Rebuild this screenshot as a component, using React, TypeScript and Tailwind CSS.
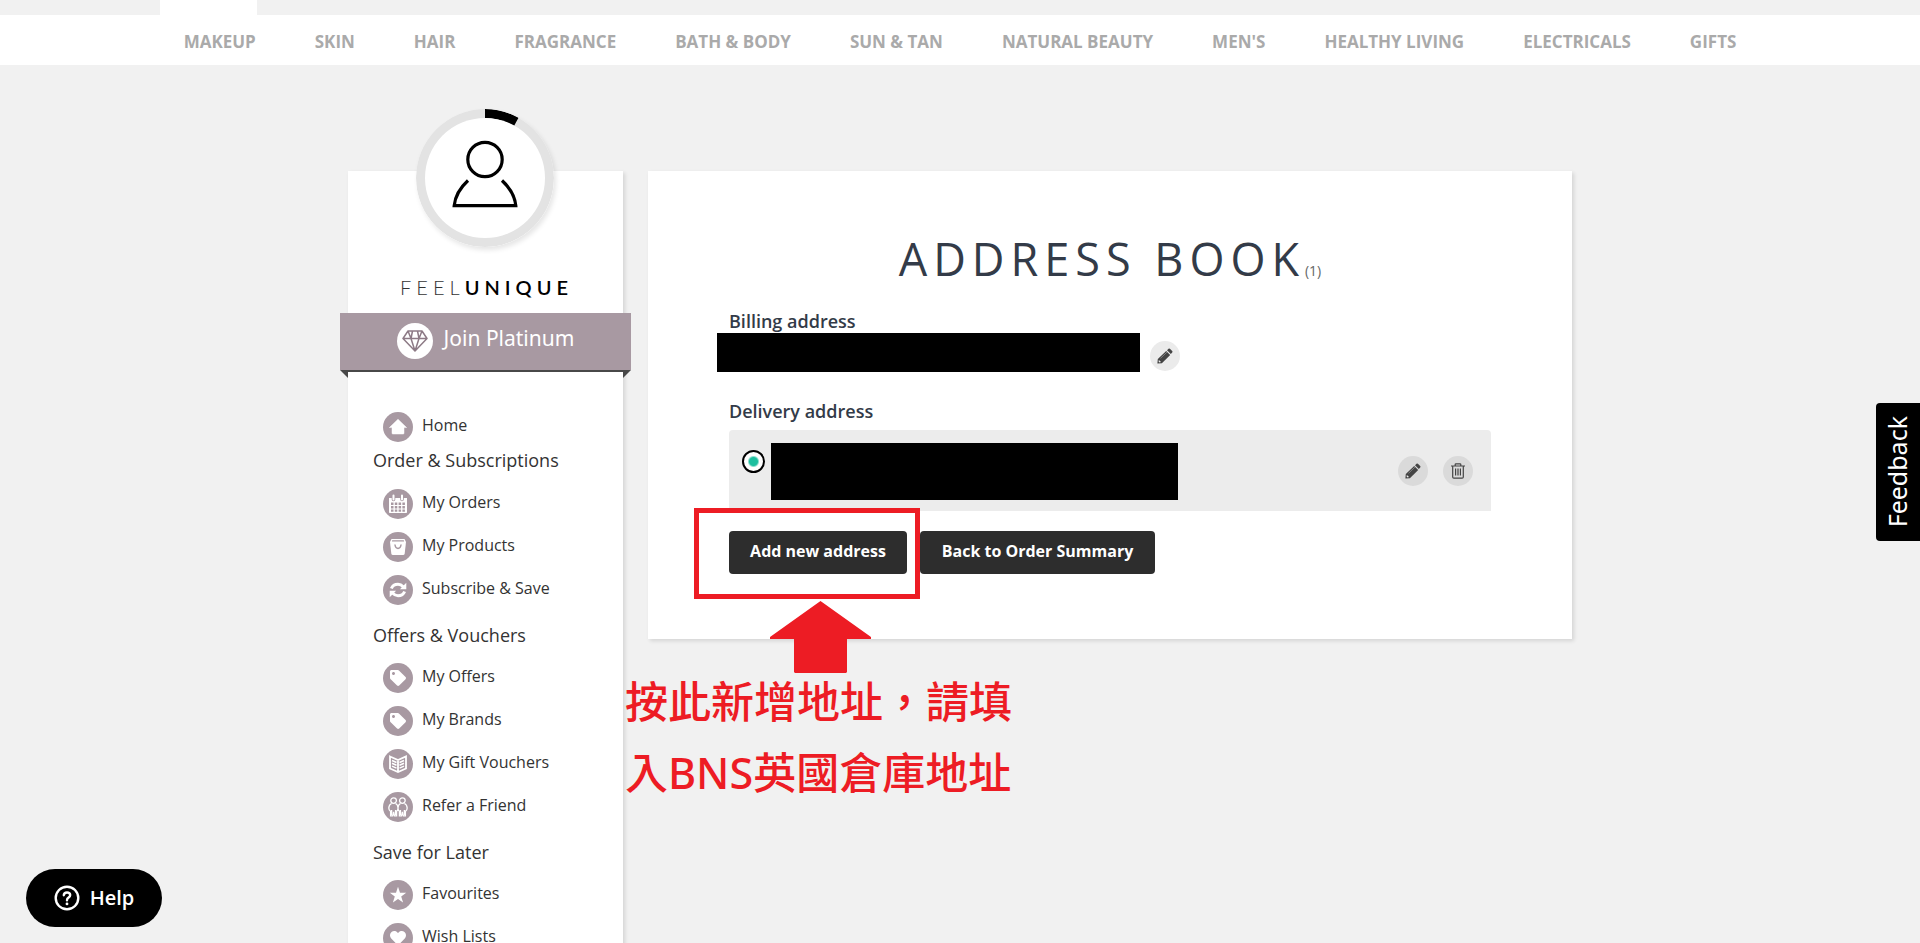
import type { ReactNode } from "react";
import { FaHeart, FaTag } from "react-icons/fa";

const categories = [
  "Makeup",
  "Skin",
  "Hair",
  "Fragrance",
  "Bath & Body",
  "Sun & Tan",
  "Natural Beauty",
  "Men's",
  "Healthy Living",
  "Electricals",
  "Gifts",
];

function HomeIcon() {
  return (
    <svg viewBox="0 0 20 20" className="size-5" fill="currentColor">
      <path d="M10 2.200 18.600 10.600H16V16.200Q16 17 15.200 17H4.800Q4 17 4 16.200V10.600H1.400Z" stroke="currentColor" strokeWidth="0.5" strokeLinejoin="round" />
    </svg>
  );
}

function CalendarIcon() {
  return (
    <svg viewBox="0 0 20 20" className="size-5">
      <path d="M1 4h18v14.200q0 .8-.8.800H1.800q-.8 0-.8-.8z" fill="#fff" />
      <path d="M5.500 1.200v4.300M14 1.200v4.300" stroke="#a899a2" strokeWidth="3.600" strokeLinecap="round" />
      <path d="M5.500 1.400v4M14 1.400v4" stroke="#fff" strokeWidth="2" strokeLinecap="round" />
      <path
        d="M3 8.500h2.500v2.500H3zM6.800 8.500h2.500v2.500H6.800zM10.600 8.500h2.500v2.500h-2.500zM14.400 8.500h2.500v2.500h-2.500zM3 12.100h2.500v2.300H3zM6.800 12.100h2.500v2.300H6.800zM10.600 12.100h2.500v2.300h-2.500zM14.400 12.100h2.500v2.300h-2.500zM3 15.500h2.500v2.200H3zM6.800 15.500h2.500v2.200H6.800zM10.600 15.500h2.500v2.200h-2.500zM14.400 15.500h2.500v2.200h-2.500z"
        fill="#a899a2"
      />
    </svg>
  );
}

function BagIcon() {
  return (
    <svg viewBox="0 0 20 20" className="size-5">
      <path d="M3.500 2h13l1.500 3-1.300 11.500q-.2 1.500-1.700 1.500H5q-1.500 0-1.700-1.500L2 5z" fill="#fff" />
      <path d="M4.600 3.900h10.800M7 8q.5 3.500 3 3.500T13 8" stroke="#a899a2" strokeWidth="1.400" fill="none" strokeLinecap="round" />
    </svg>
  );
}

function RefreshIcon() {
  return (
    <svg viewBox="0 0 20 20" className="size-5" fill="none" stroke="#fff" strokeWidth="3">
      <path d="M3.400 8.600Q5 4.300 10 4.300q3 0 5.200 2.400" />
      <path d="M16.600 11.400Q15 15.700 10 15.700q-3 0-5.200-2.400" />
      <path d="M18.300 2.800v6.400h-6.400zM1.700 17.200v-6.400h6.400z" fill="#fff" stroke="none" />
    </svg>
  );
}

function BookletIcon() {
  return (
    <svg viewBox="0 0 20 20" className="size-5" fill="none" stroke="#fff" strokeWidth="1.500">
      <path d="M2 2.500 10 6l8-3.500V14.500L10 18l-8-3.500zM10 6v12" strokeWidth="1.800" />
      <path d="M4 6.500l4.500 2M4 9.300l4.500 2M4 12.100l4.500 2M16 6.500l-4.500 2M16 9.300l-4.500 2M16 12.100l-4.500 2" />
    </svg>
  );
}

function FriendsIcon() {
  return (
    <svg viewBox="0 0 20 20" className="size-5" fill="none" stroke="#fff" strokeWidth="1.300">
      <circle cx="5.600" cy="3.600" r="2.800" />
      <circle cx="14.400" cy="3.600" r="2.800" />
      <path d="M3.600 6.500Q.9 7.800.8 11q0 2.300 1.800 3.500v4.300h2.100L5.600 15l.9 3.800h2.100v-4.300Q10 13.500 10 11q0-3.300-2.500-4.500M12.500 6.500Q10 7.800 10 11q0 2.500 1.400 3.500v4.300h2.100l.9-3.800.9 3.800h2.100v-4.300q1.800-1.200 1.800-3.500-.1-3.200-2.800-4.500" />
      <path d="M3.500 13v5M7.700 13v5M12.300 13v5M16.500 13v5" strokeWidth="1.600" />
    </svg>
  );
}

function StarIcon() {
  return (
    <svg viewBox="0 0 20 20" className="size-5" fill="currentColor">
      <path d="M10 1.800 12 7.800h6.200l-5 3.700 1.900 6L10 13.900 4.900 17.500l1.900-6-5-3.700H8z" />
    </svg>
  );
}

function PencilIcon() {
  return (
    <svg viewBox="0 0 16 16" className="size-4" fill="#444">
      <path d="M.4 15.600.8 11 9.200 2.900l4 4L4.900 15.200z" />
      <path d="M10 2.200 11.500.8q.7-.6 1.400 0l2.300 2.300q.7.700 0 1.400l-1.400 1.500z" />
      <path d="M1.900 11.900l2.100 2.100-1.500.4-.9-.9z" fill="#ebebeb" />
      <path d="M3.500 10.300 10 4.100" stroke="#999" strokeWidth=".7" />
    </svg>
  );
}

function TrashIcon() {
  return (
    <svg viewBox="0 0 16 16" className="size-4" fill="none" stroke="#444" strokeWidth="1.200">
      <path d="M1 3h14M5.200 3V1.600q0-.8.800-.8h4q.8 0 .8.800V3M2.700 3.200V14q0 1.200 1.200 1.200h8.200q1.200 0 1.200-1.200V3.200" />
      <path d="M5.600 5.500v7M8 5.500v7M10.400 5.500v7" />
    </svg>
  );
}

type Item = { label: string; icon: ReactNode };

const groups: { title: string; items: Item[] }[] = [
  {
    title: "Order & Subscriptions",
    items: [
      { label: "My Orders", icon: <CalendarIcon /> },
      { label: "My Products", icon: <BagIcon /> },
      { label: "Subscribe & Save", icon: <RefreshIcon /> },
    ],
  },
  {
    title: "Offers & Vouchers",
    items: [
      { label: "My Offers", icon: <FaTag className="size-4" /> },
      { label: "My Brands", icon: <FaTag className="size-4" /> },
      { label: "My Gift Vouchers", icon: <BookletIcon /> },
      { label: "Refer a Friend", icon: <FriendsIcon /> },
    ],
  },
  {
    title: "Save for Later",
    items: [
      { label: "Favourites", icon: <StarIcon /> },
      { label: "Wish Lists", icon: <FaHeart className="size-4" /> },
    ],
  },
];

function MenuLink({ label, icon }: Item) {
  return (
    <a href="#" className="flex h-[30px] items-center gap-[9px] pl-[35px] text-[#333]">
      <span className="flex size-[30px] items-center justify-center rounded-full bg-[#a899a2] text-white">{icon}</span>
      <span className="pb-1 text-[16px] leading-6">{label}</span>
    </a>
  );
}

function Sidebar() {
  return (
    <aside className="w-[275px] shrink-0 bg-white pb-10 shadow-[2px_2px_4px_rgba(0,0,0,0.12)]">
      <div className="-mt-[62px] flex justify-center pr-px">
        <svg viewBox="0 0 138 138" className="size-[138px] rounded-full shadow-[2px_3px_5px_rgba(0,0,0,0.1)]" role="img" aria-label="Profile">
          <circle cx="69" cy="69" r="69" fill="#e3e3e3" />
          <path d="M69 0A69 69 0 0 1 102.500 8.700L98 17A60 60 0 0 0 69 9Z" fill="#000" />
          <circle cx="69" cy="69" r="60" fill="#fff" />
          <g fill="none" stroke="#000" strokeWidth="3.200">
            <circle cx="69" cy="50.500" r="17.200" />
            <path d="M52 71.500Q39.500 83 38.200 96.700H99.800Q98.500 83 86 71.500" strokeLinejoin="miter" />
          </g>
        </svg>
      </div>
      <p className="mt-[26px] pl-[2px] text-center font-['Lato'] text-[20px] leading-7 tracking-[5px] text-black">
        <span className="font-light text-[#333]">FEEL</span>
        <span className="font-semibold">UNIQUE</span>
      </p>
      <div className="-mx-2 mt-[12px]">
        <a href="#" className="flex h-[57px] items-center justify-center gap-[11px] bg-[#a899a2] pb-px text-white">
          <span className="flex size-9 items-center justify-center rounded-full bg-white">
            <svg viewBox="0 0 26 22" className="h-[22px] w-[26px]" fill="none" stroke="#8d7a86" strokeWidth="1.500" strokeLinejoin="round">
              <path d="M6 1h14l5 7.500L13 21 1 8.500zM1 8.500h24M6 1l3 7.500L13 21l4-12.500L20 1M9 8.500 10.500 1M17 8.500 15.500 1" />
            </svg>
          </span>
          <span className="pb-[6px] font-['Noto_Sans'] text-[21px] leading-7">Join Platinum</span>
        </a>
        <svg viewBox="0 0 291 8" className="block h-2 w-full" preserveAspectRatio="none">
          <path d="M0 0H291L283 8V2H8V8Z" fill="#484848" />
        </svg>
      </div>
      <nav className="mt-[34px]" aria-label="Account">
        <MenuLink label="Home" icon={<HomeIcon />} />
        {groups.map((g, i) => (
          <section key={g.title}>
            <h2 className={i === 0 ? "pt-1 pb-[15px] pl-[25px] text-[18px] leading-7 text-[#333]" : "pt-4 pb-[14px] pl-[25px] text-[18px] leading-7 text-[#333]"}>
              {g.title}
            </h2>
            <div className="flex flex-col gap-[13px]">
              {g.items.map((item) => (
                <MenuLink key={item.label} {...item} />
              ))}
            </div>
          </section>
        ))}
      </nav>
    </aside>
  );
}

function AddressBook() {
  return (
    <main className="min-w-0 flex-1 bg-white px-[81px] pt-[56px] pb-[65px] text-[#333b48] shadow-[2px_2px_4px_rgba(0,0,0,0.12)]">
      <h1 className="text-center text-[45px] leading-[64px] whitespace-nowrap uppercase">
        <span className="tracking-[6px]">Address Book</span>
        <small className="text-[14px] text-[#666]">(1)</small>
      </h1>
      <h2 className="mt-[6px] text-[18px] leading-6 font-semibold">Billing address</h2>
      <div className="-ml-3 flex gap-[10px]">
        <div className="h-[39px] w-[423px] bg-black" />
        <button aria-label="Edit billing address" className="mt-2 flex size-[30px] items-center justify-center rounded-full bg-[#ebebeb]">
          <PencilIcon />
        </button>
      </div>
      <h2 className="mt-[27px] text-[18px] leading-6 font-semibold">Delivery address</h2>
      <div className="mt-[7px] flex h-[81px] items-center rounded-t bg-[#ececec] pr-[18px] pl-[13px]">
        <input
          type="radio"
          name="delivery"
          aria-label="Delivery address"
          defaultChecked
          className="mb-[18px] size-[23px] appearance-none rounded-full border-2 border-black bg-white bg-[radial-gradient(circle,#1dbf9f_4px,#fff_6px)]"
        />
        <div className="mt-[2px] ml-[6px] h-[57px] w-[407px] bg-black" />
        <div className="ml-auto flex gap-[15px]">
          <button aria-label="Edit delivery address" className="flex size-[30px] items-center justify-center rounded-full bg-[#dadada]">
            <PencilIcon />
          </button>
          <button aria-label="Delete delivery address" className="flex size-[30px] items-center justify-center rounded-full bg-[#dadada]">
            <TrashIcon />
          </button>
        </div>
      </div>
      <div className="mt-5 flex gap-[13px] text-[16px] leading-6 font-bold text-white">
        <div className="relative">
          <button className="h-[43px] w-[178px] rounded bg-[#2d2d2d] pb-1 whitespace-nowrap">Add new address</button>
          <div className="pointer-events-none absolute -top-[23px] -left-[35px] h-[91px] w-[226px] border-[5px] border-[#ed1c24]" />
          <svg viewBox="0 0 101 72" className="absolute top-[70px] left-[41px] h-[72px] w-[101px]" fill="#ed1c24">
            <path d="M50.500 0 101 36V38H77V71L76 72H25L24 71V38H0V36Z" />
          </svg>
          <p className="absolute top-[135px] -left-[104px] font-['Noto_Sans','Noto_Sans_CJK_TC',sans-serif] text-[43px] leading-[71px] font-medium whitespace-nowrap text-[#ed1c24]">
            按此新增地址，請填
            <br />
            入BNS英國倉庫地址
          </p>
        </div>
        <button className="h-[43px] w-[235px] rounded bg-[#2d2d2d] pb-1 whitespace-nowrap">Back to Order Summary</button>
      </div>
    </main>
  );
}

export default function App() {
  return (
    <div className="h-screen overflow-x-hidden overflow-y-auto bg-[#f1f1f1] font-['Open_Sans','Noto_Sans_CJK_TC',sans-serif] [scrollbar-width:none]">
      <header>
        <div className="mx-auto h-[15px] max-w-[1600px]">
          <div className="h-full w-[97px] bg-white" />
        </div>
        <nav aria-label="Categories" className="flex h-[50px] items-center justify-center gap-[59px] bg-white pt-[3px]">
          {categories.map((c) => (
            <a key={c} href="#" className="text-[17px] leading-6 font-bold whitespace-nowrap text-[#aaa] uppercase">
              {c}
            </a>
          ))}
        </nav>
      </header>
      <div className="mx-auto flex max-w-[1224px] items-start gap-[25px] pt-[106px]">
        <Sidebar />
        <AddressBook />
      </div>
      <button className="fixed top-[403px] right-0 flex h-[138px] w-11 items-center justify-center rounded-l bg-black font-['Noto_Sans'] text-[25px] text-white">
        <span className="rotate-180 [writing-mode:vertical-rl]">Feedback</span>
      </button>
      <button className="fixed bottom-4 left-[26px] flex h-[58px] w-[136px] items-center justify-center gap-[10px] rounded-full bg-black text-[20px] font-semibold text-white">
        <svg viewBox="0 0 26 26" className="size-[26px]" fill="none" stroke="#fff" strokeWidth="2.400" strokeLinecap="round">
          <circle cx="13" cy="13" r="11.300" />
          <path d="M9.800 10.200Q10 7.500 13 7.500t3.200 2.600Q16.200 11.700 14.500 12.600 13 13.400 13 15.200" />
          <path d="M13 18.800v.1" strokeWidth="2.800" />
        </svg>
        Help
      </button>
    </div>
  );
}
